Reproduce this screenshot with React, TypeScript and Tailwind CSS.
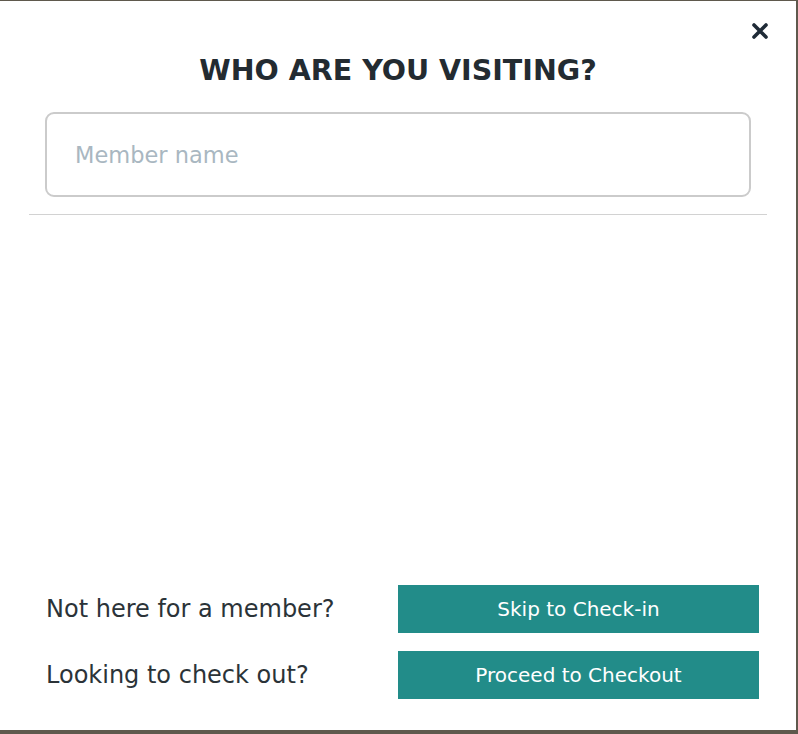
import React, { useState } from 'react';

const font = { fontFamily: '"DejaVu Sans", "Open Sans", sans-serif' };

export default function App() {
  const [name, setName] = useState('');

  return (
    <div className="w-[798px] h-[734px] bg-[#5f594d] pt-px overflow-hidden" style={font}>
      <div className="relative w-[796px] h-[729px] bg-white flex flex-col">
        <button className="absolute right-[27px] top-[21px] text-[#1f2b37]" aria-label="Close">
          <svg width="18" height="18" viewBox="0 0 18 18">
            <path d="M3 3 L15 15 M15 3 L3 15" stroke="currentColor" strokeWidth="3.6" strokeLinecap="round" />
          </svg>
        </button>

        <h1 className="mt-[54px] text-center text-[28.5px] font-bold leading-[32px] text-[#232b31]">
          WHO ARE YOU VISITING?
        </h1>

        <div className="mt-[25px] px-[45px]">
          <input
            value={name}
            onChange={(e) => setName(e.target.value)}
            placeholder="Member name"
            className="w-full h-[85px] rounded-[9px] border-2 border-[#cbcbcb] px-[28px] text-[22.5px] text-[#2b3338] placeholder:text-[#a9b7c1] outline-none"
          />
        </div>

        <div className="mt-[17px] mx-[29px] h-px bg-[#d2d2d2]" />

        <div className="flex-1" />

        <div className="flex flex-col gap-[18px] pl-[46px] pr-[37px] pb-[31px]">
          <div className="flex items-center justify-between">
            <span className="text-[24px] text-[#2b3338]">Not here for a member?</span>
            <button className="w-[361px] h-[48px] bg-[#228c89] text-white text-[20px]">Skip to Check-in</button>
          </div>
          <div className="flex items-center justify-between">
            <span className="text-[24px] text-[#2b3338]">Looking to check out?</span>
            <button className="w-[361px] h-[48px] bg-[#228c89] text-white text-[20px]">Proceed to Checkout</button>
          </div>
        </div>
      </div>
    </div>
  );
}
